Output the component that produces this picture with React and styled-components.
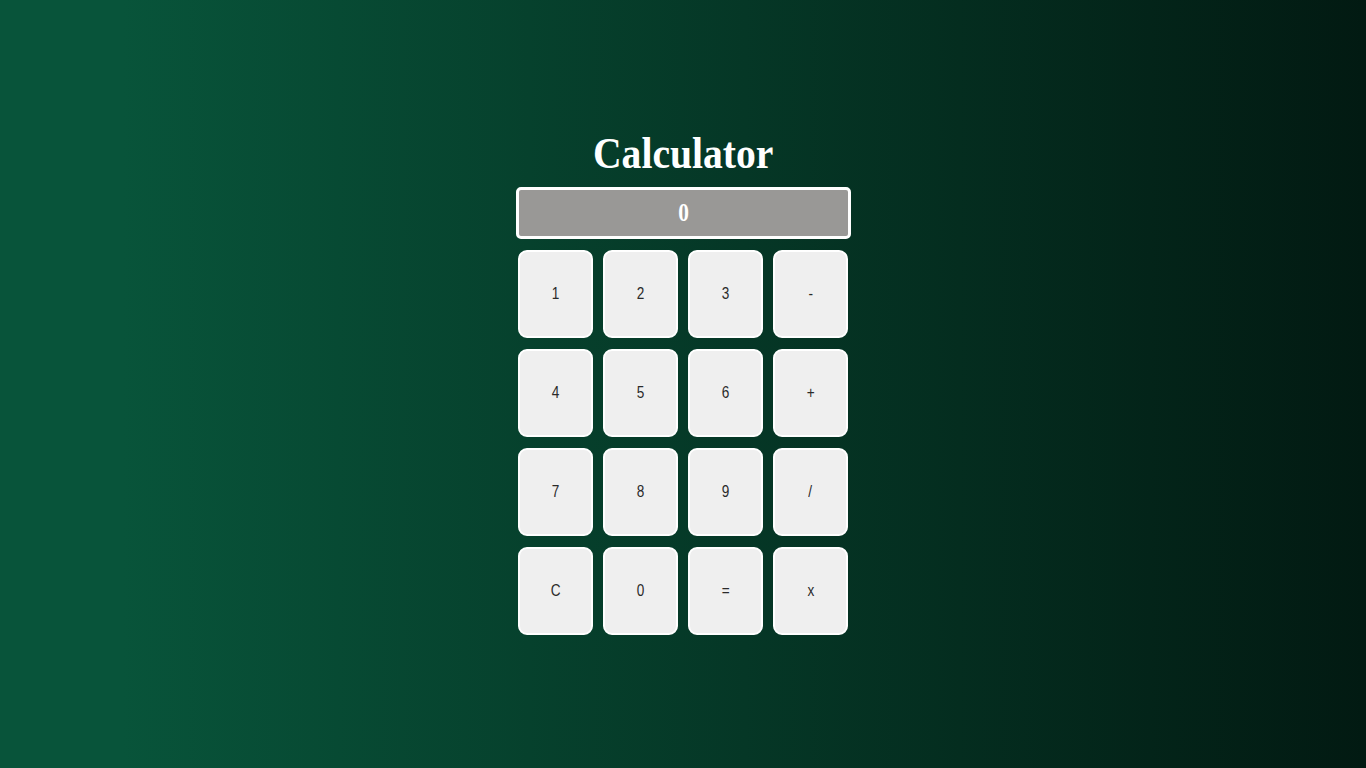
import React, { useState } from "react";
import styled, { createGlobalStyle } from "styled-components";

const Global = createGlobalStyle`
  html, body { margin: 0; padding: 0; }
  body {
    min-height: 100vh;
    background: linear-gradient(to right, #08543a 9%, #021a12 100%);
    font-family: "Liberation Serif", "Times New Roman", serif;
  }
`;

const Page = styled.div`
  min-height: 100vh;
  display: flex;
  flex-direction: column;
  align-items: center;
  justify-content: center;
  padding-bottom: 4px;
  box-sizing: border-box;
`;

const Title = styled.h1`
  margin: 0 0 9px 0;
  font-family: "Liberation Serif", "Times New Roman", serif;
  font-weight: 700;
  font-size: 44px;
  line-height: 49px;
  color: #ffffff;
  transform: scaleX(0.9);
`;

const Display = styled.div`
  box-sizing: border-box;
  width: 335px;
  height: 52px;
  border: 3px solid #ffffff;
  border-radius: 5px;
  background: #999896;
  display: flex;
  align-items: center;
  justify-content: center;
  margin-bottom: 11px;
`;

const DisplayText = styled.span`
  font-family: "Liberation Serif", "Times New Roman", serif;
  font-weight: 700;
  font-size: 26px;
  color: #ffffff;
  transform: scaleX(0.82);
`;

const Keys = styled.div`
  display: grid;
  grid-template-columns: repeat(4, 75px);
  grid-auto-rows: 88px;
  column-gap: 10px;
  row-gap: 11px;
`;

const Key = styled.button`
  box-sizing: border-box;
  border: 2px solid #ffffff;
  border-radius: 9px;
  background: #efefef;
  padding: 0;
  display: flex;
  align-items: center;
  justify-content: center;
  cursor: pointer;
`;

const KeyLabel = styled.span`
  font-family: "Liberation Sans", Arial, sans-serif;
  font-size: 16px;
  color: #2a2a2a;
  transform: scaleX(0.85);
`;

const keys = ["1", "2", "3", "-", "4", "5", "6", "+", "7", "8", "9", "/", "C", "0", "=", "x"];

export default function App() {
  const [value, setValue] = useState("0");
  const press = (k) => {
    if (k === "C") return setValue("0");
    if (k === "=") {
      try {
        // eslint-disable-next-line no-new-func
        const r = Function(`return (${value.replace(/x/g, "*")})`)();
        setValue(String(r));
      } catch (e) {
        setValue("0");
      }
      return;
    }
    setValue((v) => (v === "0" ? k : v + k));
  };
  return (
    <>
      <Global />
      <Page>
        <Title>Calculator</Title>
        <Display>
          <DisplayText>{value}</DisplayText>
        </Display>
        <Keys>
          {keys.map((k) => (
            <Key key={k} onClick={() => press(k)}>
              <KeyLabel>{k}</KeyLabel>
            </Key>
          ))}
        </Keys>
      </Page>
    </>
  );
}
